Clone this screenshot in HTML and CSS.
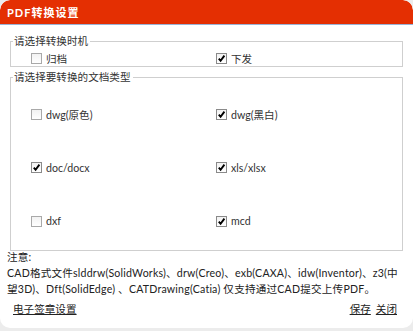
FILE: index.html
```html
<!DOCTYPE html>
<html lang="zh">
<head>
<meta charset="utf-8">
<link rel="stylesheet" href="styles.css">
</head>
<body>
<div class="dialog">
  <div class="titlebar">PDF转换设置</div>
  <div class="content">
    <fieldset class="group group-time">
      <legend>请选择转换时机</legend>
      <div class="grid">
        <label class="opt"><span class="cb"></span>归档</label>
        <label class="opt"><span class="cb checked"><svg viewBox="0 0 9 9"><path d="M1.8 4.6 L3.6 6.8 L7.4 1.6" fill="none" stroke="#000" stroke-width="1.9"/></svg></span>下发</label>
      </div>
    </fieldset>
    <fieldset class="group group-type">
      <legend>请选择要转换的文档类型</legend>
      <div class="grid types">
        <label class="opt"><span class="cb"></span>dwg(原色)</label>
        <label class="opt"><span class="cb checked"><svg viewBox="0 0 9 9"><path d="M1.8 4.6 L3.6 6.8 L7.4 1.6" fill="none" stroke="#000" stroke-width="1.9"/></svg></span>dwg(黑白)</label>
        <label class="opt"><span class="cb checked"><svg viewBox="0 0 9 9"><path d="M1.8 4.6 L3.6 6.8 L7.4 1.6" fill="none" stroke="#000" stroke-width="1.9"/></svg></span>doc/docx</label>
        <label class="opt"><span class="cb checked"><svg viewBox="0 0 9 9"><path d="M1.8 4.6 L3.6 6.8 L7.4 1.6" fill="none" stroke="#000" stroke-width="1.9"/></svg></span>xls/xlsx</label>
        <label class="opt"><span class="cb"></span>dxf</label>
        <label class="opt"><span class="cb checked"><svg viewBox="0 0 9 9"><path d="M1.8 4.6 L3.6 6.8 L7.4 1.6" fill="none" stroke="#000" stroke-width="1.9"/></svg></span>mcd</label>
      </div>
    </fieldset>
    <div class="note">
      <div>注意:</div>
      <div>CAD格式文件slddrw(SolidWorks)、drw(Creo)、exb(CAXA)、idw(Inventor)、z3(中望3D)、Dft(SolidEdge) 、CATDrawing(Catia) 仅支持通过CAD提交上传PDF。</div>
    </div>
    <div class="footer">
      <a class="link">电子签章设置</a>
      <div class="actions">
        <a class="link">保存</a>
        <a class="link">关闭</a>
      </div>
    </div>
  </div>
</div>
</body>
</html>
```
FILE: styles.css
```css
html, body {
  margin: 0;
  padding: 0;
}
body {
  width: 413px;
  height: 331px;
  background: #ececec;
  font-family: "Lato", "Noto Sans CJK SC", "Microsoft YaHei", sans-serif;
  font-size: 10.6px;
  color: #222;
  overflow: hidden;
}
.dialog {
  width: 413px;
  height: 328px;
  background: #fff;
  border-radius: 10px;
  overflow: hidden;
}
.titlebar {
  height: 24px;
  line-height: 25px;
  background: #e42f02;
  color: #fff;
  font-weight: bold;
  font-size: 11px;
  letter-spacing: 1px;
  padding-left: 7px;
  border-bottom: 1px solid #9ab2d6;
  border-radius: 10px 10px 0 0;
}
.content {
  padding: 0 7px;
}
.group {
  margin: 0 3px;
  padding: 0;
  border: 1px solid #cfcfcf;
  border-radius: 0;
  min-width: 0;
}
.group legend {
  padding: 0 2px 0 1px;
  margin-left: 2px;
  line-height: 15px;
  color: #333;
}
.group-time {
  margin-top: 9px;
  padding: 1px 0 0;
}
.group-type {
  margin-top: 3px;
  padding: 21px 0 21px;
}
.grid {
  display: grid;
  grid-template-columns: 185px 1fr;
  padding-left: 20px;
}
.types {
  row-gap: 37.5px;
}
.opt {
  display: flex;
  align-items: center;
  height: 16px;
  color: #333;
}
.cb {
  width: 9px;
  height: 9px;
  border: 1px solid #a9a9a9;
  background: linear-gradient(#f2f2f2, #fff);
  margin-right: 4px;
  display: inline-flex;
  flex: none;
}
.cb.checked {
  border-color: #8a8a8a;
}
.cb svg {
  width: 9px;
  height: 9px;
}
.note {
  margin-top: -2px;
  line-height: 16px;
  letter-spacing: 0.2px;
  color: #222;
}
.footer {
  display: flex;
  justify-content: space-between;
  margin-top: 4px;
  padding: 0 6px;
  line-height: 16px;
}
.actions {
  display: flex;
  gap: 5px;
  padding-right: 3px;
}
.link {
  color: #222;
  text-decoration: underline;
  cursor: pointer;
}
```
